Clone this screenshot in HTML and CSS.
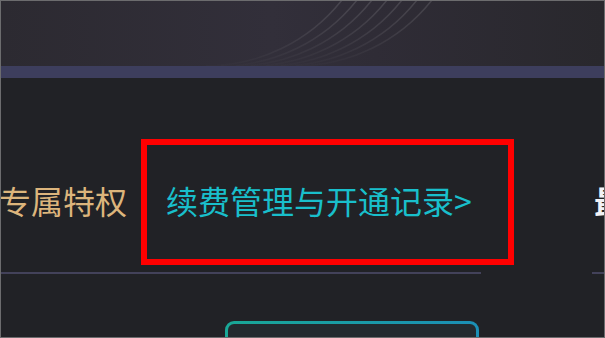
FILE: index.html
```html
<!DOCTYPE html>
<html lang="zh-CN">
<head>
<meta charset="utf-8">
<title>续费管理</title>
<link rel="stylesheet" href="styles.css">
</head>
<body>
<div class="frame">
  <header class="banner">
    <svg class="arcs" width="605" height="66" viewBox="0 0 605 66" aria-hidden="true">
      <defs>
        <linearGradient id="fade" x1="0" y1="1" x2="0" y2="0">
          <stop offset="0" stop-color="#ffffff" stop-opacity="0.01"/>
          <stop offset="0.5" stop-color="#ffffff" stop-opacity="0.08"/>
          <stop offset="1" stop-color="#ffffff" stop-opacity="0.12"/>
        </linearGradient>
      </defs>
      <g fill="none" stroke="url(#fade)" stroke-width="1.5">
        <path d="M205 66 A174 174 0 0 0 341 0"/>
        <path d="M220 66 A174 174 0 0 0 356 0"/>
        <path d="M235 66 A174 174 0 0 0 371 0"/>
        <path d="M250 66 A174 174 0 0 0 386 0"/>
        <path d="M265 66 A174 174 0 0 0 401 0"/>
        <path d="M280 66 A174 174 0 0 0 416 0"/>
        <path d="M295 66 A174 174 0 0 0 431 0"/>
      </g>
    </svg>
  </header>
  <div class="band"></div>
  <main class="content">
    <nav class="tabs">
      <div class="tab tab-gold">专属特权</div>
      <div class="tab tab-teal">续费管理与开通记录&gt;</div>
      <div class="tab-gap"></div>
      <div class="tab tab-white">最</div>
    </nav>
    <div class="highlight"></div>
    <div class="btn-row">
      <div class="action-btn"></div>
    </div>
  </main>
</div>
</body>
</html>
```
FILE: styles.css
```css
html, body {
  margin: 0;
  padding: 0;
  background: #212226;
}
.frame {
  width: 605px;
  height: 338px;
  box-sizing: border-box;
  border: 1px solid #6c6c6e;
  overflow: hidden;
  background: #212226;
  font-family: "Noto Sans CJK SC", "Noto Sans", sans-serif;
}
.banner {
  height: 65px;
  background: linear-gradient(90deg, #2c2a31 0%, #322f3a 45%, #2f2c36 62%, #29282d 100%);
  overflow: hidden;
}
.arcs {
  display: block;
  margin-top: -1px;
}
.band {
  height: 12px;
  background: #3d3e5d;
}
.content {
  position: relative;
}
.tabs {
  display: flex;
  align-items: flex-end;
  padding-top: 106px;
  margin-left: -2px;
}
.tab {
  flex: none;
  font-size: 32px;
  line-height: 32px;
  padding-bottom: 56px;
  border-bottom: 2px solid #43425a;
  white-space: nowrap;
}
.tab-gold {
  color: #dcb57c;
  width: 144px;
}
.tab-teal {
  color: #19bfcb;
  width: 315px;
  padding-left: 23px;
}
.tab-gap {
  width: 111px;
  flex: none;
}
.tab-white {
  color: #f2f2f5;
  font-weight: 700;
  width: 60px;
  padding-left: 2px;
}
.highlight {
  position: absolute;
  left: 140px;
  top: 61px;
  width: 373px;
  height: 126px;
  box-sizing: border-box;
  border: 6px solid #ff0000;
}
.btn-row {
  padding-top: 47px;
  padding-left: 224px;
}
.action-btn {
  width: 254px;
  height: 40px;
  box-sizing: border-box;
  border: 3px solid transparent;
  border-radius: 9px;
  background:
    linear-gradient(#232a2f, #232a2f) padding-box,
    linear-gradient(90deg, #19a897, #1b8fb6) border-box;
}
```
